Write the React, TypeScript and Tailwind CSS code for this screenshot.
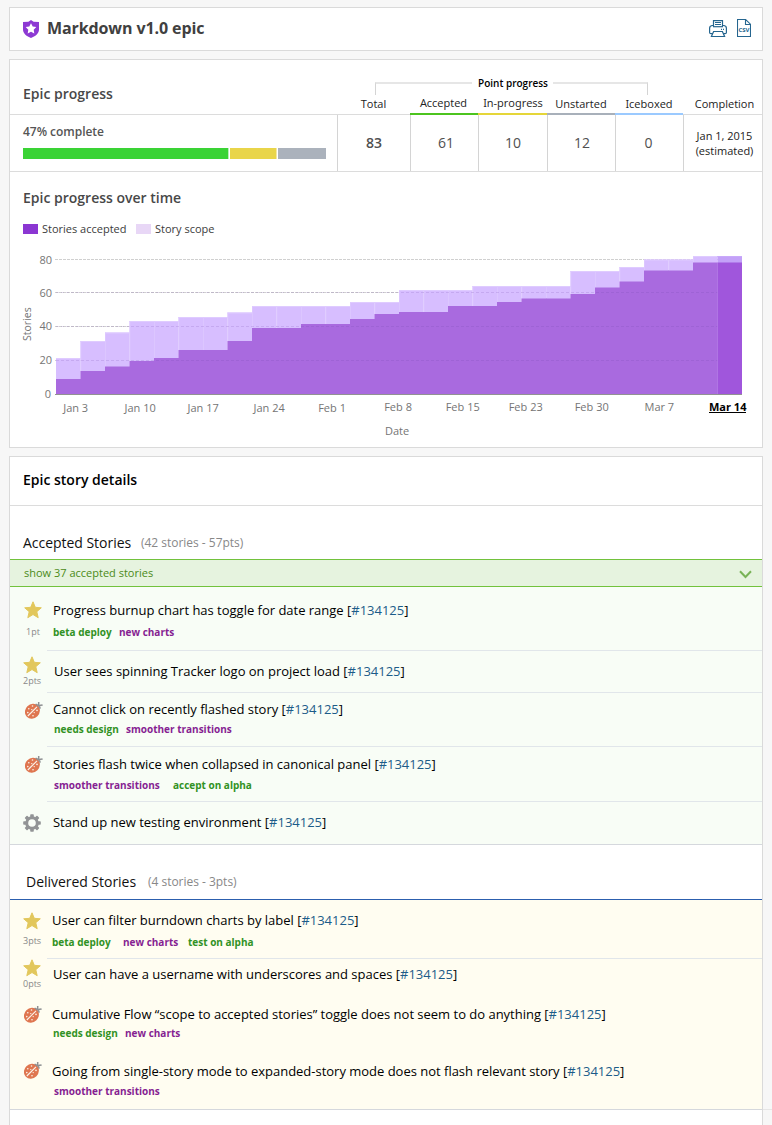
import type { ReactNode } from "react";

type Kind = "star" | "bug" | "chore";
type Tag = { text: string; tone: "green" | "purple"; className: string };
type StoryData = {
  kind: Kind;
  title: string;
  row: string;
  iconClass: string;
  titleClass: string;
  points?: string;
  pointsClass?: string;
  tags?: Tag[];
  tagsClass?: string;
  divider?: boolean;
};

function ShieldIcon() {
  return (
    <svg width="16" height="18" viewBox="0 0 16 18">
      <path d="M8 0 L10.6 1.7 L16 1.9 V9.5 C16 13.5 12.2 16.4 8 18 C3.8 16.4 0 13.5 0 9.5 V1.9 L5.4 1.7 Z" fill="#8d39d3" />
      <path d="M8 3.3 L9.7 6.6 L13.3 7.1 L10.7 9.7 L11.3 13.4 L8 11.7 L4.7 13.4 L5.3 9.7 L2.7 7.1 L6.3 6.6 Z" fill="#fff" />
    </svg>
  );
}

function PrinterIcon() {
  return (
    <svg width="18" height="18" viewBox="0 0 18 18" fill="none" stroke="#25658f" strokeWidth="1.2">
      <path d="M4.5 7 V0.6 H13.5 V7" />
      <path d="M6 2.5 H12 M6 4.5 H12" />
      <path d="M4.5 5.5 H3 Q0.6 6 0.6 8.2 V12.5 Q0.6 13.6 2 13.6 H3.8 M13.5 5.5 H15 Q17.4 6 17.4 8.2 V12.5 Q17.4 13.6 16 13.6 H14.2" />
      <path d="M4 6.7 H14" />
      <path d="M4.6 11.5 H13.4 L15.6 16.5 H2.4 Z" />
      <path d="M12 9.4 H13 M14 9.4 H15" />
    </svg>
  );
}

function CsvIcon() {
  return (
    <svg width="14" height="18" viewBox="0 0 14 18">
      <path d="M0.5 0.5 H8.6 L13.5 5.2 V17.5 H0.5 Z M8.5 0.8 V5.5 H13.2" fill="none" stroke="#25658f" strokeWidth="1.1" />
      <text x="7" y="13.2" textAnchor="middle" fontSize="6" fontWeight="700" fill="#25658f">
        CSV
      </text>
    </svg>
  );
}

function StarIcon() {
  return (
    <svg width="18" height="18" viewBox="0 0 18 18">
      <path
        d="M9 0.8 L11.3 6.3 L17.3 6.8 L12.8 10.7 L14.2 16.7 L9 13.5 L3.8 16.7 L5.2 10.7 L0.7 6.8 L6.7 6.3 Z"
        fill="#e2c75c"
        stroke="#e2c75c"
        strokeWidth="1"
        strokeLinejoin="round"
      />
    </svg>
  );
}

function BugIcon() {
  return (
    <svg width="18" height="18" viewBox="0 0 18 18">
      <ellipse cx="7.4" cy="9.2" rx="7.9" ry="7.1" transform="rotate(-45 7.4 9.2)" fill="#df7650" />
      <path d="M2.8 14 L12 4.8" stroke="#fbf6ee" strokeWidth="1.1" />
      <g fill="#fbf6ee">
        <circle cx="7.5" cy="4" r="0.8" />
        <circle cx="3.8" cy="6.8" r="0.8" />
        <circle cx="6.8" cy="7.6" r="0.7" />
        <circle cx="2.8" cy="10.6" r="0.8" />
        <circle cx="12" cy="8.4" r="0.8" />
        <circle cx="9.2" cy="10.6" r="0.7" />
        <circle cx="8" cy="13.8" r="0.8" />
      </g>
      <path d="M13.6 -0.4 Q14 2 13.2 3.6 M10.6 2.2 Q12.2 3 13.4 3.8 M12.8 3.4 Q15 3.6 17.6 3 M13.4 3.4 Q15 4.8 15.2 6.6" fill="none" stroke="#8f9193" strokeWidth="1.5" />
    </svg>
  );
}

function GearIcon() {
  return (
    <svg width="18" height="18" viewBox="-9 -9 18 18">
      <g fill="#929496">
        {[0, 45, 90, 135].map((a) => (
          <rect key={a} x="-1.8" y="-8.8" width="3.6" height="17.6" rx="0.8" transform={`rotate(${a})`} />
        ))}
        <circle r="6.8" />
      </g>
      <circle r="3.8" fill="#f9fdf7" />
    </svg>
  );
}

function Story({ s }: { s: StoryData }) {
  const match = s.title.match(/^(.*\[)(#\d+)(\])$/);
  return (
    <div className={`flex ${s.row}`}>
      <div className="flex w-[37px] shrink-0 flex-col">
        <div className={s.iconClass}>
          {s.kind === "star" && <StarIcon />}
          {s.kind === "bug" && <BugIcon />}
          {s.kind === "chore" && <GearIcon />}
        </div>
        {s.points && <div className={`text-[9px] leading-3 text-[#888] ${s.pointsClass}`}>{s.points}</div>}
      </div>
      <div className={`flex grow flex-col ${s.divider ? "border-b border-[#e1e6ea]" : ""}`}>
        <div className={`text-[13px] leading-5 tracking-[-0.012px] text-black ${s.titleClass}`}>
          {match?.[1]}
          <span className="text-[#1c5c89]">{match?.[2]}</span>
          {match?.[3]}
        </div>
        {s.tags && (
          <div className={`flex text-[10px] leading-[14px] font-bold ${s.tagsClass}`}>
            {s.tags.map((t) => (
              <span key={t.text} className={`${t.tone === "green" ? "text-[#319224]" : "text-[#861f92]"} ${t.className}`}>
                {t.text}
              </span>
            ))}
          </div>
        )}
      </div>
    </div>
  );
}

const accepted: StoryData[] = [
  {
    kind: "star", title: "Progress burnup chart has toggle for date range [#134125]", row: "h-16", divider: true,
    iconClass: "pt-3.5 pl-3.5", points: "1pt", pointsClass: "pt-[7px] pl-4", titleClass: "pt-[13px] pl-1.5",
    tagsClass: "pt-[5px] pl-1.5",
    tags: [{ text: "beta deploy", tone: "green", className: "w-[66px]" }, { text: "new charts", tone: "purple", className: "" }],
  },
  {
    kind: "star", title: "User sees spinning Tracker logo on project load [#134125]", row: "h-[42px]", divider: true,
    iconClass: "pt-[5px] pl-[13px]", points: "2pts", pointsClass: "pt-px pl-[13px]", titleClass: "pt-2.5 pl-[7px]",
  },
  {
    kind: "bug", title: "Cannot click on recently flashed story [#134125]", row: "h-[54px]", divider: true,
    iconClass: "pt-[9px] pl-[15px]", titleClass: "pt-1.5 pl-1.5", tagsClass: "pt-[3px] pl-[7px]",
    tags: [{ text: "needs design", tone: "green", className: "w-[72px]" }, { text: "smoother transitions", tone: "purple", className: "" }],
  },
  {
    kind: "bug", title: "Stories flash twice when collapsed in canonical panel [#134125]", row: "h-[55px]", divider: true,
    iconClass: "pt-[9px] pl-[15px]", titleClass: "pt-[7px] pl-1.5", tagsClass: "pt-1 pl-[7px]",
    tags: [{ text: "smoother transitions", tone: "purple", className: "w-[119px]" }, { text: "accept on alpha", tone: "green", className: "" }],
  },
  {
    kind: "chore", title: "Stand up new testing environment [#134125]", row: "h-[42px]",
    iconClass: "pt-3 pl-[13px]", titleClass: "pt-2.5 pl-1.5",
  },
];

const delivered: StoryData[] = [
  {
    kind: "star", title: "User can filter burndown charts by label [#134125]", row: "h-[59px]", divider: true,
    iconClass: "pt-3 pl-[13px]", points: "3pts", pointsClass: "pt-[5px] pl-[13px]", titleClass: "pt-2.5 pl-[5px]",
    tagsClass: "pt-[5px] pl-[5px]",
    tags: [
      { text: "beta deploy", tone: "green", className: "w-[71px]" },
      { text: "new charts", tone: "purple", className: "w-[65px]" },
      { text: "test on alpha", tone: "green", className: "" },
    ],
  },
  {
    kind: "star", title: "User can have a username with underscores and spaces [#134125]", row: "h-[41px]",
    iconClass: "pl-[13px]", points: "0pts", pointsClass: "pt-px pl-[13px]", titleClass: "pt-[5px] pl-1.5",
  },
  {
    kind: "bug", title: "Cumulative Flow “scope to accepted stories” toggle does not seem to do anything [#134125]", row: "h-[55px]",
    iconClass: "pt-1.5 pl-3.5", titleClass: "pt-1 pl-[5px]", tagsClass: "pt-0.5 pl-1.5",
    tags: [{ text: "needs design", tone: "green", className: "w-[72px]" }, { text: "new charts", tone: "purple", className: "" }],
  },
  {
    kind: "bug", title: "Going from single-story mode to expanded-story mode does not flash relevant story [#134125]", row: "h-[54px]",
    iconClass: "pt-[7px] pl-3.5", titleClass: "pt-1.5 pl-[5px]", tagsClass: "pt-[3px] pl-[7px]",
    tags: [{ text: "smoother transitions", tone: "purple", className: "" }],
  },
];

const scopeTop = [358, 341, 332.5, 321, 321, 317, 317, 312.5, 306, 306, 306, 306, 302, 302, 290, 290, 290, 286, 286, 286, 286, 271, 271, 267, 259.5, 259.5, 256, 256];
const acceptedTop = [379, 371, 366.5, 361, 358, 350, 350, 341, 328, 328, 324, 324, 319, 314, 312, 312, 306, 306, 302, 298.5, 298.5, 294, 287.5, 281.5, 270.5, 270.5, 262.5, 262.5];
const yTicks: [string, number, number][] = [["80", 259.5, 264], ["60", 292.5, 297], ["40", 326.5, 330], ["20", 360.5, 364]];
const xTicks: [string, number, number][] = [
  ["Jan 3", 63.2, 412], ["Jan 10", 124.5, 412], ["Jan 17", 187.5, 412], ["Jan 24", 253.5, 412], ["Feb 1", 318.2, 412],
  ["Feb 8", 384.2, 411], ["Feb 15", 445.7, 411], ["Feb 23", 508.7, 411], ["Feb 30", 574.7, 411], ["Mar 7", 644.5, 411],
];

function Chart() {
  const step = 24.5;
  return (
    <svg className="block" width="752" height="200" viewBox="10 244 752 200" fontSize="11" fill="#757575">
      {yTicks.map(([t, y]) => (
        <line key={t} x1="55" x2="742" y1={y} y2={y} stroke="#d0d0d0" strokeDasharray="3 1" />
      ))}
      {scopeTop.map((y, i) => (
        <g key={i}>
          <rect x={56 + i * step} y={y} width={step} height={394 - y} fill={i === 27 ? "#c3a1f8" : "#d7beff"} />
          <rect x={56 + i * step} y={y} width={step} height="1" fill={i === 27 ? "#c9a9fa" : "#dfcbff"} />
          {i > 0 && i < 27 && <rect x={56 + i * step} y={y} width="0.7" height={394 - y} fill="#dfcbff" />}
        </g>
      ))}
      {acceptedTop.map((y, i) => (
        <rect key={i} x={56 + i * step} y={y} width={step + (i < 26 ? 0.5 : 0)} height={394 - y} fill={i === 27 ? "#a056dc" : "#a96adf"} />
      ))}
      {yTicks.map(([t, y]) => (
        <line key={t} x1="56" x2="717" y1={y} y2={y} stroke="#6b3fa0" strokeOpacity={y < 260 ? 0 : 0.16} strokeDasharray="3 2" />
      ))}
      <line x1="55" x2="742" y1="394.5" y2="394.5" stroke="#929292" />
      {yTicks.map(([t, , b]) => (
        <text key={t} x="52" y={b} textAnchor="end">{t}</text>
      ))}
      <text x="51" y="398" textAnchor="end">0</text>
      {xTicks.map(([t, x, y]) => (
        <text key={t} x={x} y={y}>{t}</text>
      ))}
      <text x="709" y="411" fontWeight="700" fill="#000">Mar 14</text>
      <line x1="709" x2="746" y1="412.5" y2="412.5" stroke="#000" />
      <text x="385" y="435">Date</text>
      <text transform="translate(31 341) rotate(-90)" fontSize="10.5">Stories</text>
    </svg>
  );
}

const columns: { label: string; head: string; value: ReactNode; cell: string }[] = [
  { label: "Total", head: "w-[73px] border-b border-[#dcdcdc] pb-0.5", value: "83", cell: "w-[73px] font-semibold" },
  { label: "Accepted", head: "w-[68px] border-b-2 border-[#4cc41f] pr-px pb-0.5", value: "61", cell: "w-[68px] pl-[3px]" },
  { label: "In-progress", head: "w-[69px] border-b-2 border-[#e5d639] pl-px pb-0.5", value: "10", cell: "w-[69px]" },
  { label: "Unstarted", head: "w-[68px] border-b-2 border-[#a8b0ba] pb-px", value: "12", cell: "w-[68px] pl-px" },
  { label: "Iceboxed", head: "w-[68px] border-b-2 border-[#9bcaff] pb-px", value: "0", cell: "w-[68px] pr-0.5" },
];

export default function App() {
  return (
    <div className="flex h-[1125px] w-[772px] flex-col overflow-hidden bg-[#f7f7f7] pt-[7px] pl-[9px] whitespace-nowrap font-['Open_Sans','Noto_Sans',sans-serif]">
      <header className="flex h-11 w-[754px] shrink-0 items-start border border-[#dadada] bg-white pt-3 pl-[13px]">
        <ShieldIcon />
        <h1 className="-mt-[3px] ml-2 text-[16px] leading-[22px] font-bold tracking-[-0.1px] text-[#404040]">Markdown v1.0 epic</h1>
        <div className="-mt-px ml-auto flex gap-[10px] pr-[11px]">
          <div className="pt-px"><PrinterIcon /></div>
          <CsvIcon />
        </div>
      </header>

      <section className="mt-2 flex h-[389px] w-[754px] shrink-0 flex-col border border-[#dadada] bg-white">
        <div className="relative flex h-[55px] shrink-0 text-[11px] leading-4 text-[#222]">
          <div className="w-[327px] border-b border-[#dcdcdc] pt-6 pl-[13px] text-[14px] leading-5 font-semibold text-[#484848]">Epic progress</div>
          {columns.map((c) => (
            <div key={c.label} className={`flex items-end justify-center [font-feature-settings:'ss01','ss02','ss03','salt','cv01','cv02'] ${c.head}`}>{c.label}</div>
          ))}
          <div className="flex w-[79px] items-end justify-center border-b border-[#dcdcdc] pb-0.5 pl-1">Completion</div>
          <div className="absolute top-[15px] left-[365px] flex w-[273px] items-start">
            <div className="mt-[7px] h-[13px] w-[97px] border-t-2 border-l border-[#e6e6e6] border-l-[#d4d4d4]" />
            <div className="grow pl-px text-center text-[10px] font-semibold text-black">Point progress</div>
            <div className="mt-[7px] h-[13px] w-[95px] border-t-2 border-r border-[#e6e6e6] border-r-[#d4d4d4]" />
          </div>
        </div>
        <div className="flex h-[57px] shrink-0 border-b border-[#dcdcdc]">
          <div className="w-[327px] pl-[13px]">
            <div className="pt-[7px] text-[12px] leading-5 font-semibold tracking-[-0.03px] text-[#555]">47% complete</div>
            <div className="mt-1.5 flex h-[11px] w-[303px] gap-px">
              <div className="w-[206px] border-r border-[#b9efb7] bg-[#3ad335]" />
              <div className="w-[47px] border-r border-[#f2e8a5] bg-[#e9d54a]" />
              <div className="grow bg-[#abb2bc]" />
            </div>
          </div>
          {columns.map((c) => (
            <div key={c.label} className={`flex items-start justify-center border-l border-[#d4d4d4] pt-[18px] text-[14px] leading-5 text-[#505050] ${c.cell}`}>{c.value}</div>
          ))}
          <div className="w-[79px] border-l border-[#d4d4d4] pt-[13px] pl-[3px] text-center text-[11px] leading-[15px] text-[#222]">
            Jan 1, 2015
            <br />
            (estimated)
          </div>
        </div>
        <h2 className="mt-4 pl-[13px] text-[14px] leading-5 font-semibold text-[#484848]">Epic progress over time</h2>
        <div className="mt-[13px] flex h-4 shrink-0 items-center pl-[13px] text-[11px] leading-4 text-[#3c3c3c]">
          <span className="h-2.5 w-[15px] bg-[#8b36d2]" />
          <span className="w-[98px] pl-1">Stories accepted</span>
          <span className="h-2.5 w-[15px] bg-[#e8d7f6]" />
          <span className="pl-1">Story scope</span>
        </div>
        <div className="mt-[7px]">
          <Chart />
        </div>
      </section>

      <section className="mt-2 flex h-[680px] w-[754px] shrink-0 flex-col border border-[#dadada] bg-white">
        <h2 className="h-[49px] shrink-0 border-b border-[#dcdcdc] pt-[13px] pl-[13px] text-[14px] leading-5 font-semibold text-black">Epic story details</h2>
        <div className="flex h-[53px] shrink-0 items-start pt-[27px] pl-[13px]">
          <span className="w-[118px] text-[14px] leading-5 tracking-[-0.03px] text-[#111]">Accepted Stories</span>
          <span className="text-[12px] leading-5 tracking-[-0.02px] text-[#888]">(42 stories - 57pts)</span>
        </div>
        <div className="flex h-7 shrink-0 items-center justify-between border-y border-[#72c23c] bg-[#e6f3df] pr-2.5 pl-3.5 text-[11px] text-[#4b8a17]">
          show 37 accepted stories
          <svg width="13" height="9" viewBox="0 0 13 9" className="mt-0.5">
            <path d="M1 1.2 L6.5 7 L12 1.2" fill="none" stroke="#79b357" strokeWidth="2" />
          </svg>
        </div>
        <div className="h-[258px] shrink-0 border-b border-[#d5d8dd] bg-[#f8fdf6]">
          {accepted.map((s) => (
            <Story key={s.title} s={s} />
          ))}
        </div>
        <div className="flex h-[54px] shrink-0 items-start pt-[27px] pl-4">
          <span className="w-[122px] text-[14px] leading-5 tracking-[-0.03px] text-[#111]">Delivered Stories</span>
          <span className="text-[12px] leading-5 tracking-[-0.02px] text-[#888]">(4 stories - 3pts)</span>
        </div>
        <div className="relative h-[211px] shrink-0 border-t border-b border-t-[#2c5fae] border-b-[#d5d8dd] bg-[#fffdf1] after:absolute after:-right-2.5 after:-bottom-px after:h-px after:w-[9px] after:bg-[#e6e6e6]">
          {delivered.map((s) => (
            <Story key={s.title} s={s} />
          ))}
        </div>
      </section>
    </div>
  );
}
